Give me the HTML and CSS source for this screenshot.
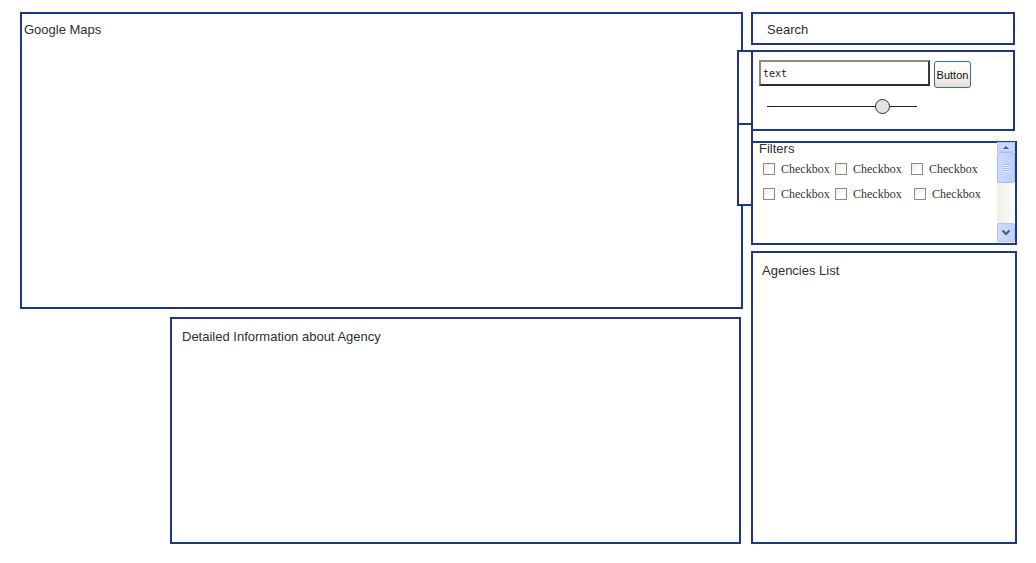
FILE: index.html
```html
<!DOCTYPE html>
<html>
<head>
<meta charset="utf-8">
<link rel="stylesheet" href="styles.css">
</head>
<body>
<div class="page">
  <div class="left">
    <div class="box map"><span class="label">Google Maps</span></div>
    <div class="box detail"><span class="label">Detailed Information about Agency</span></div>
  </div>
  <div class="right">
    <div class="box search"><span class="label">Search</span></div>
    <div class="box controls">
      <div class="input-row">
        <div class="text-input">text</div>
        <div class="btn">Button</div>
      </div>
      <div class="slider"><div class="knob"></div></div>
    </div>
    <div class="box filters">
      <div class="filter-body">
        <div class="filter-label">Filters</div>
        <div class="cb-row row-a">
          <div class="cb"><span class="cb-box"></span><span class="cb-text">Checkbox</span></div>
          <div class="cb"><span class="cb-box"></span><span class="cb-text">Checkbox</span></div>
          <div class="cb"><span class="cb-box"></span><span class="cb-text">Checkbox</span></div>
        </div>
        <div class="cb-row row-b">
          <div class="cb"><span class="cb-box"></span><span class="cb-text">Checkbox</span></div>
          <div class="cb"><span class="cb-box"></span><span class="cb-text">Checkbox</span></div>
          <div class="cb"><span class="cb-box"></span><span class="cb-text">Checkbox</span></div>
        </div>
      </div>
      <div class="scrollbar">
        <div class="sb-up"><span class="tri-up"></span></div>
        <div class="sb-thumb"><span class="grip"></span></div>
        <div class="sb-track"></div>
        <div class="sb-down">
          <svg width="10" height="7" viewBox="0 0 10 7"><polyline points="1.5,1.5 5,5 8.5,1.5" fill="none" stroke="#4a5d86" stroke-width="2"/></svg>
        </div>
      </div>
    </div>
    <div class="box agencies"><span class="label">Agencies List</span></div>
    <div class="bracket"></div>
  </div>
</div>
</body>
</html>
```

FILE: styles.css
```css
html, body {
  margin: 0;
  padding: 0;
  background: #ffffff;
}

body {
  font-family: "Liberation Sans", Arial, sans-serif;
  font-size: 13px;
  line-height: 16px;
  color: #2f2f2f;
}

.page {
  display: flex;
  gap: 8px;
  padding: 12px 0 0 20px;
}

.box {
  border: 2px solid #1c3786;
  box-sizing: border-box;
  background: #ffffff;
}

.left {
  width: 723px;
  display: flex;
  flex-direction: column;
}

.map {
  height: 297px;
  padding: 8px 2px;
}

.detail {
  width: 571px;
  height: 227px;
  margin: 8px 0 0 150px;
  padding: 10px 10px;
}

.right {
  position: relative;
  width: 266px;
  display: flex;
  flex-direction: column;
}

.search {
  width: 264px;
  height: 33px;
  padding: 8px 14px 0;
}

.controls {
  width: 264px;
  height: 81px;
  margin-top: 5px;
  padding: 8px 6px 0;
}

.input-row {
  display: flex;
  align-items: flex-start;
}

.text-input {
  width: 171px;
  height: 26px;
  box-sizing: border-box;
  border: 2px solid;
  border-color: #8a8a8a #3a3a3a #2e2e2e #8a8a8a;
  padding: 0 0 0 2px;
  font-family: "DejaVu Sans Mono", monospace;
  font-size: 10px;
  line-height: 24px;
  color: #222;
}

.btn {
  width: 37px;
  height: 27px;
  margin: 1px 0 0 4px;
  box-sizing: border-box;
  border: 1px solid #3b679e;
  border-radius: 3px;
  background: linear-gradient(#ffffff, #f6f5f0 55%, #e2dfd0);
  font-family: "Liberation Sans", Arial, sans-serif;
  font-size: 11px;
  line-height: 27px;
  text-align: center;
  color: #111;
}

.slider {
  width: 150px;
  height: 16px;
  margin: 10px 0 0 8px;
  display: flex;
  align-items: center;
  background: linear-gradient(#222, #222) center / 100% 1px no-repeat;
}

.knob {
  width: 15px;
  height: 15px;
  box-sizing: border-box;
  margin-left: 108px;
  border: 1px solid #333;
  border-radius: 50%;
  background: #e3e3e3;
}

.filters {
  height: 104px;
  margin-top: 10px;
  display: flex;
}

.filter-body {
  flex: 1;
}

.filter-label {
  padding-left: 6px;
  line-height: 11px;
}

.cb-row {
  display: grid;
  padding-left: 10px;
  height: 14px;
  align-items: center;
}

.row-a {
  margin-top: 8px;
  grid-template-columns: 72px 76px auto;
}

.row-b {
  margin-top: 11px;
  grid-template-columns: 72px 79px auto;
}

.cb {
  display: flex;
  align-items: center;
  gap: 6px;
}

.cb-box {
  width: 12px;
  height: 12px;
  box-sizing: border-box;
  border: 1px solid #938a7d;
  background: linear-gradient(135deg, #ecebe6, #ffffff 60%);
}

.cb-text {
  font-family: "Liberation Serif", "Times New Roman", serif;
  font-size: 12px;
  line-height: 14px;
  color: #333;
}

.scrollbar {
  width: 18px;
  margin-top: -1px;
  display: flex;
  flex-direction: column;
  background: linear-gradient(to right, #efede6, #fcfcfa);
}

.sb-up {
  height: 10px;
  box-sizing: border-box;
  border: 1px solid #b3c6f1;
  border-radius: 2px;
  background: #c8d7fc;
  display: flex;
  align-items: center;
  justify-content: center;
}

.tri-up {
  width: 0;
  height: 0;
  border-left: 3px solid transparent;
  border-right: 3px solid transparent;
  border-bottom: 3px solid #4a5d86;
}

.sb-thumb {
  height: 31px;
  box-sizing: border-box;
  border: 1px solid #a9bdee;
  border-radius: 2px;
  background: linear-gradient(to right, #cbd9fd, #bccefb);
  display: flex;
  align-items: center;
  justify-content: center;
}

.grip {
  width: 7px;
  height: 8px;
  background: repeating-linear-gradient(#a4bbf2 0 1px, #edf2ff 1px 2px);
}

.sb-track {
  flex: 1;
}

.sb-down {
  height: 19px;
  margin-bottom: 1px;
  box-sizing: border-box;
  border: 1px solid #b1c5f2;
  border-radius: 2px;
  background: linear-gradient(to right, #cfdcfd, #bfd0fb);
  display: flex;
  align-items: center;
  justify-content: center;
}

.sb-down svg {
  display: block;
}

.agencies {
  height: 293px;
  margin-top: 6px;
  padding: 10px 9px;
}

.bracket {
  position: absolute;
  left: -14px;
  top: 38px;
  width: 16px;
  height: 156px;
  box-sizing: border-box;
  border: 2px solid #1c3786;
  background: #ffffff;
}

.bracket::after {
  content: "";
  position: absolute;
  left: 0;
  right: 0;
  top: 71px;
  height: 2px;
  background: #1c3786;
}
```
